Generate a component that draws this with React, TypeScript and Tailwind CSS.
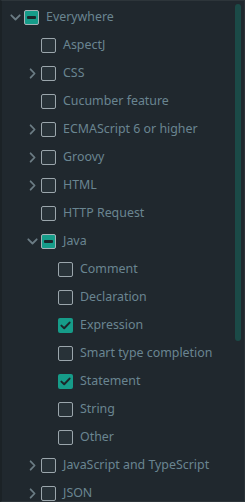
import React from "react";

type Row = { label: string; level: number; chevron?: "right" | "down"; state: "off" | "on" | "mixed" };

const rows: Row[] = [
  { label: "Everywhere", level: 0, chevron: "down", state: "mixed" },
  { label: "AspectJ", level: 1, state: "off" },
  { label: "CSS", level: 1, chevron: "right", state: "off" },
  { label: "Cucumber feature", level: 1, state: "off" },
  { label: "ECMAScript 6 or higher", level: 1, chevron: "right", state: "off" },
  { label: "Groovy", level: 1, chevron: "right", state: "off" },
  { label: "HTML", level: 1, chevron: "right", state: "off" },
  { label: "HTTP Request", level: 1, state: "off" },
  { label: "Java", level: 1, chevron: "down", state: "mixed" },
  { label: "Comment", level: 2, state: "off" },
  { label: "Declaration", level: 2, state: "off" },
  { label: "Expression", level: 2, state: "on" },
  { label: "Smart type completion", level: 2, state: "off" },
  { label: "Statement", level: 2, state: "on" },
  { label: "String", level: 2, state: "off" },
  { label: "Other", level: 2, state: "off" },
  { label: "JavaScript and TypeScript", level: 1, chevron: "right", state: "off" },
  { label: "JSON", level: 1, chevron: "right", state: "off" },
];

function Chevron({ dir }: { dir: "right" | "down" }) {
  return (
    <svg width="11" height="11" viewBox="0 0 11 11" fill="none">
      {dir === "down" ? (
        <path d="M1.3 3.3 L5.5 7.5 L9.7 3.3" stroke="#6b7c84" strokeWidth="1.8" strokeLinecap="round" strokeLinejoin="round" />
      ) : (
        <path d="M3.6 1.3 L7.6 5.5 L3.6 9.7" stroke="#6b7c84" strokeWidth="1.8" strokeLinecap="round" strokeLinejoin="round" />
      )}
    </svg>
  );
}

function Box({ state }: { state: Row["state"] }) {
  if (state === "off") {
    return <div className="w-[15px] h-[15px] rounded-[2px] border border-[#9ba6ac] bg-[#283238] shrink-0" />;
  }
  if (state === "mixed") {
    return (
      <div className="w-[15px] h-[15px] rounded-[2px] border border-[#a6b2b6] bg-[#169c89] shrink-0 flex items-center justify-center">
        <div className="w-[9px] h-[3px] rounded-[1px] bg-[#1c2529]" />
      </div>
    );
  }
  return (
    <div className="w-[15px] h-[15px] rounded-[2px] bg-[#169c89] shrink-0 flex items-center justify-center">
      <svg width="15" height="15" viewBox="0 0 15 15" fill="none">
        <path d="M3.4 7.6 L6.2 10.3 L11.6 4.6" stroke="#1c2529" strokeWidth="2" strokeLinecap="round" strokeLinejoin="round" />
      </svg>
    </div>
  );
}

const pads = ["pl-[5px]", "pl-[22px]", "pl-[39px]"];

export default function App() {
  return (
    <div
      className="relative w-[245px] h-[502px] bg-[#20282e] overflow-hidden border-t border-b border-[#2d353a] border-l-2 border-l-[#1b2226] border-r border-r-[#2a3237]"
      style={{ fontFamily: '"Noto Sans", "Liberation Sans", Arial, sans-serif' }}
    >
      <div className="flex flex-col pt-[2px]">
        {rows.map((r, i) => (
          <div key={i} className={`flex items-center h-[28px] ${pads[r.level]} shrink-0`}>
            <div className="w-[16px] flex items-center justify-center">
              {r.chevron ? <Chevron dir={r.chevron} /> : null}
            </div>
            <div className="w-[1px]" />
            <Box state={r.state} />
            <span className="ml-[7px] text-[12.4px] text-[#6a8591] whitespace-nowrap leading-none">{r.label}</span>
          </div>
        ))}
      </div>
      <div className="absolute left-[233px] top-[3px] w-[6px] h-[337px] rounded-full bg-[#1b4a47]" />
    </div>
  );
}
